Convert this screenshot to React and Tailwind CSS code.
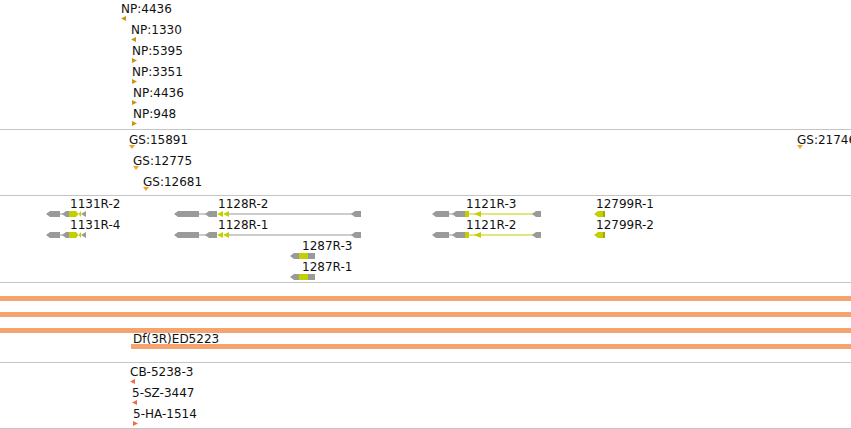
// App.jsx — genome browser track view
const GRAY = "#9a9a9a";
const YEL = "#c2d000";

const npRows = [
  { label: "NP:4436", x: 121, tx: 0, dir: "left" },
  { label: "NP:1330", x: 131, tx: 0, dir: "left" },
  { label: "NP:5395", x: 132, tx: 0, dir: "right" },
  { label: "NP:3351", x: 132, tx: 0, dir: "right" },
  { label: "NP:4436", x: 132, tx: 1, dir: "right" },
  { label: "NP:948", x: 132, tx: 1, dir: "right" },
];

const gsRows = [
  { label: "GS:15891", x: 129 },
  { label: "GS:12775", x: 133 },
  { label: "GS:12681", x: 143 },
];

const cbRows = [
  { label: "CB-5238-3", x: 130, tx: 0, dir: "left" },
  { label: "5-SZ-3447", x: 132, tx: 0, dir: "left" },
  { label: "5-HA-1514", x: 133, tx: 0, dir: "right" },
];

function Tri({ dir, color }) {
  const pts =
    dir === "left"
      ? "0,2.5 5,0 5,5"
      : dir === "right"
        ? "0,0 5,2.5 0,5"
        : "0,0 6,0 3,4";
  const w = dir === "down" ? 6 : 5;
  const h = dir === "down" ? 4 : 5;
  return (
    <svg className="block" width={w} height={h} viewBox={`0 0 ${w} ${h}`}>
      <polygon points={pts} fill={color} />
    </svg>
  );
}

// one feature: label over its marker, placed at its genomic x
function Feature({ x, tx = 0, label, dir, color, gap = "mt-px" }) {
  return (
    <div className="flex flex-col h-[21px] pt-[3px]" style={{ marginLeft: x }}>
      <span
        className="whitespace-nowrap text-[12px] leading-[12px] text-[#111]"
        style={{ marginLeft: tx }}
      >
        {label}
      </span>
      <div className={gap}>
        <Tri dir={dir} color={color} />
      </div>
    </div>
  );
}

// left pointing exon arrow from a to b
const arrow = (a, b, c) => (
  <polygon
    key={`a${a}`}
    points={`${a},3 ${a + 4},0 ${b},0 ${b},6 ${a + 4},6`}
    fill={c}
  />
);
const box = (a, b, c) => (
  <rect key={`b${a}`} x={a} y={0} width={b - a} height={6} fill={c} />
);
const line = (a, b, c) => (
  <rect key={`l${a}`} x={a} y={2.5} width={b - a} height={1} fill={c} />
);
const ltri = (a, b, c) => (
  <polygon key={`t${a}`} points={`${a},3 ${b},0 ${b},6`} fill={c} />
);
const bow = (a, b, c) => {
  const m = (a + b) / 2;
  return (
    <polygon
      key={`w${a}`}
      points={`${a},0 ${m},3 ${b},0 ${b},6 ${m},3 ${a},6`}
      fill={c}
    />
  );
};

const genes = {
  "1131R": [
    arrow(46, 60, GRAY),
    line(60, 63, GRAY),
    arrow(62, 69, GRAY),
    box(69, 76, YEL),
    bow(76, 81, YEL),
    ltri(81, 86, GRAY),
  ],
  "1128R": [
    arrow(174, 199, GRAY),
    line(199, 206, GRAY),
    arrow(205, 217, GRAY),
    ltri(217, 223, YEL),
    ltri(223, 229, YEL),
    line(229, 352, GRAY),
    arrow(351, 361, GRAY),
  ],
  "1287R": [arrow(290, 299, GRAY), box(299, 308, YEL), box(308, 315, GRAY)],
  "1121R": [
    arrow(432, 449, GRAY),
    line(449, 453, GRAY),
    arrow(452, 465, GRAY),
    box(465, 469, YEL),
    line(469, 534, YEL),
    ltri(474, 481, YEL),
    arrow(532, 541, GRAY),
  ],
  "12799R": [arrow(594, 603, YEL), box(603, 605, "#a4a800")],
};

const geneRows = [
  [["1131R-2", 70], ["1128R-2", 218], ["1121R-3", 466], ["12799R-1", 596]],
  [["1131R-4", 70], ["1128R-1", 218], ["1121R-2", 466], ["12799R-2", 596]],
  [["1287R-3", 302]],
  [["1287R-1", 302]],
];

function GeneRow({ items }) {
  return (
    <div className="relative h-[21px]">
      {items.map(([label, x]) => (
        <span
          key={label}
          className="absolute top-[2px] whitespace-nowrap text-[12px] leading-[12px] text-[#111]"
          style={{ left: x }}
        >
          {label}
        </span>
      ))}
      <svg className="absolute left-0 top-[15px]" width={851} height={6} viewBox="0 0 851 6">
        {items.map(([label]) => genes[label.split("-")[0]])}
      </svg>
    </div>
  );
}

export default function App() {
  return (
    <div className="w-[851px] h-[429px] overflow-hidden bg-white font-['DejaVu_Sans',sans-serif]">
      {/* NP track */}
      <div className="flex flex-col h-[130px] border-b border-[#c4c4c4]">
        {npRows.map((r, i) => (
          <Feature key={i} {...r} color="#c99410" />
        ))}
      </div>

      {/* GS track */}
      <div className="relative flex flex-col h-[66px] pt-px border-b border-[#c4c4c4]">
        {gsRows.map((r, i) => (
          <Feature key={i} {...r} dir="down" color="#f2a424" gap="-mt-px" />
        ))}
        <div className="absolute top-px left-0">
          <Feature x={797} label="GS:21746" dir="down" color="#f2a424" gap="-mt-px" />
        </div>
      </div>

      {/* gene models */}
      <div className="flex flex-col h-[87px] border-b border-[#c4c4c4]">
        {geneRows.map((items, i) => (
          <GeneRow key={i} items={items} />
        ))}
      </div>

      {/* deficiency track */}
      <div className="flex flex-col h-[80px] pt-[13px] gap-[11px] border-b border-[#c4c4c4]">
        <div className="h-[5px] bg-[#f5a46f]" />
        <div className="h-[5px] bg-[#f5a46f]" />
        <div className="h-[5px] bg-[#f5a46f]" />
        <div className="ml-[131px] -mt-[11px] flex flex-col">
          <span className="ml-[2px] whitespace-nowrap text-[12px] leading-[12px] text-[#111]">
            Df(3R)ED5223
          </span>
          <div className="mt-[-1px] h-[5px] bg-[#f5a46f]" />
        </div>
      </div>

      {/* insertion track */}
      <div className="flex flex-col h-[66px] border-b border-[#c4c4c4]">
        {cbRows.map((r, i) => (
          <Feature key={i} {...r} color="#f26a48" />
        ))}
      </div>
    </div>
  );
}
